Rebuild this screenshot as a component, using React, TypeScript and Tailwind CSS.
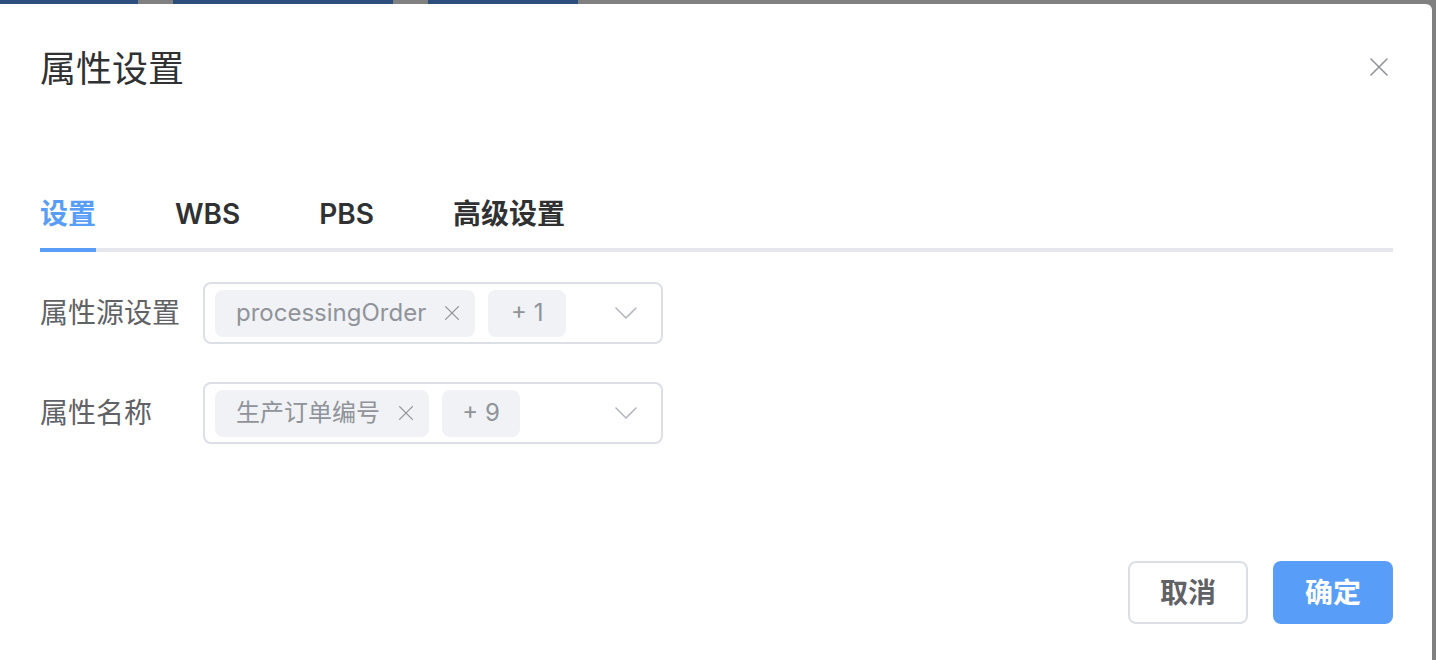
import React, { useState } from 'react';

const FONT = { fontFamily: 'Inter, "Noto Sans CJK SC", sans-serif' };

const CloseIcon = ({ size = 20, className = '' }: { size?: number; className?: string }) => (
  <svg width={size} height={size} viewBox="0 0 20 20" className={className} fill="none">
    <path d="M2 2L18 18M18 2L2 18" stroke="currentColor" strokeWidth="1.6" strokeLinecap="round" />
  </svg>
);

const Chevron = () => (
  <svg width="22" height="12" viewBox="0 0 22 12" fill="none" className="text-[#b4b7bd]">
    <path d="M1 1L11 11L21 1" stroke="currentColor" strokeWidth="1.6" strokeLinecap="round" strokeLinejoin="round" />
  </svg>
);

interface MultiSelectProps {
  first: string;
  more: number;
}

const Tag: React.FC<{ children: React.ReactNode; closable?: boolean; width?: string }> = ({ children, closable, width }) => (
  <span
    className={`flex h-[47px] items-center rounded-[8px] bg-[#f0f2f5] text-[24px] text-[#909399] ${
      closable ? 'pl-[21px] pr-[15px]' : 'justify-center'
    } ${width ?? ''}`}
  >
    <span className="leading-none">{children}</span>
    {closable && <CloseIcon size={16} className="ml-[18px] text-[#909399]" />}
  </span>
);

const MultiSelect: React.FC<MultiSelectProps> = ({ first, more }) => (
  <div className="flex h-[62px] w-[460px] items-center rounded-[8px] border-2 border-[#dcdfe6] pl-[10px] pr-[24px]">
    <div className="flex flex-1 items-center gap-[13px]">
      <Tag closable>{first}</Tag>
      <Tag width="w-[78px]">+ {more}</Tag>
    </div>
    <Chevron />
  </div>
);

const tabs = ['设置', 'WBS', 'PBS', '高级设置'];

export default function App() {
  const [active, setActive] = useState(0);

  return (
    <div className="flex h-[660px] w-full flex-col overflow-hidden bg-[#808080]" style={FONT}>
      {/* page behind the overlay */}
      <div className="flex h-[4px] shrink-0">
        <div className="w-[138px] bg-[#2b4e7c]" />
        <div className="w-[35px]" />
        <div className="w-[220px] bg-[#2b4e7c]" />
        <div className="w-[35px]" />
        <div className="w-[150px] bg-[#2b4e7c]" />
      </div>

      <div className="relative flex w-[1432px] flex-1 flex-col rounded-tr-[6px] bg-white px-[40px] pt-[40px]">
        <div className="flex items-center">
          <h2 className="text-[36px] leading-[50px] text-[#303133]">属性设置</h2>
        </div>
        <button className="absolute right-[43px] top-[53px] text-[#909399]">
          <CloseIcon size={20} />
        </button>

        <div className="mt-[86px]">
          <div className="flex h-[68px] items-center gap-[79px]">
            {tabs.map((t, i) => (
              <button
                key={t}
                onClick={() => setActive(i)}
                className={`relative flex h-full items-center text-[28px] font-semibold ${
                  i === active ? 'text-[#589ef8]' : 'text-[#303133]'
                }`}
              >
                {t}
                {i === active && <span className="absolute -bottom-[4px] left-0 right-0 z-10 h-[4px] bg-[#589ef8]" />}
              </button>
            ))}
          </div>
          <div className="mr-[-1px] h-[4px] bg-[#e4e7ed]" />
        </div>

        <div className="mt-[30px] flex flex-col gap-[38px]">
          <div className="flex items-center">
            <label className="w-[163px] text-[28px] text-[#606266]">属性源设置</label>
            <MultiSelect first="processingOrder" more={1} />
          </div>
          <div className="flex items-center">
            <label className="w-[163px] text-[28px] text-[#606266]">属性名称</label>
            <MultiSelect first="生产订单编号" more={9} />
          </div>
        </div>

        <div className="-mr-[1px] mt-[117px] flex justify-end gap-[25px]">
          <button className="h-[63px] w-[120px] rounded-[8px] border-2 border-[#dcdfe6] bg-white text-[28px] font-semibold text-[#606266]">
            取消
          </button>
          <button className="h-[63px] w-[120px] rounded-[8px] bg-[#589ef8] text-[28px] font-semibold text-white">
            确定
          </button>
        </div>
      </div>
    </div>
  );
}
